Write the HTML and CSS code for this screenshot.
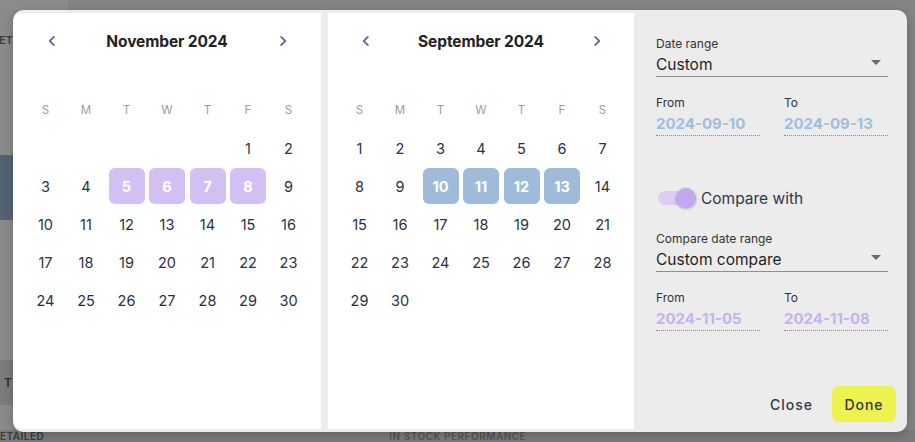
FILE: index.html
```html
<!DOCTYPE html>
<html lang="en">
<head>
<meta charset="utf-8">
<title>Date range picker</title>
<link rel="stylesheet" href="styles.css">
</head>
<body>
<div class="page">
  <div class="topbar"><div class="topbar-left"></div></div>
  <div class="side">
    <div class="side-text"><span>ET</span></div>
    <div class="side-block"></div>
    <div class="side-band"><span>T</span></div>
  </div>
  <div class="main-bg"></div>
  <div class="bottombar">
    <span class="bt1">ETAILED</span>
    <span class="bt2">IN STOCK PERFORMANCE</span>
  </div>
</div>

<div class="dialog">
  <section class="cal cal-1">
    <div class="cal-head">
      <button class="nav"><svg width="18" height="18" viewBox="0 0 24 24"><path d="M14.5 6.5 9 12l5.5 5.5" fill="none" stroke="#5b6f8c" stroke-width="2.4" stroke-linecap="round" stroke-linejoin="round"/></svg></button>
      <div class="cal-title">November 2024</div>
      <button class="nav"><svg width="18" height="18" viewBox="0 0 24 24"><path d="M9.5 6.5 15 12l-5.5 5.5" fill="none" stroke="#5b6f8c" stroke-width="2.4" stroke-linecap="round" stroke-linejoin="round"/></svg></button>
    </div>
    <div class="grid">
      <div class="wd">S</div><div class="wd">M</div><div class="wd">T</div><div class="wd">W</div><div class="wd">T</div><div class="wd">F</div><div class="wd">S</div>
      <div></div><div></div><div></div><div></div><div></div><div class="d">1</div><div class="d">2</div>
      <div class="d">3</div><div class="d">4</div><div class="d sel-p">5</div><div class="d sel-p">6</div><div class="d sel-p">7</div><div class="d sel-p">8</div><div class="d">9</div>
      <div class="d">10</div><div class="d">11</div><div class="d">12</div><div class="d">13</div><div class="d">14</div><div class="d">15</div><div class="d">16</div>
      <div class="d">17</div><div class="d">18</div><div class="d">19</div><div class="d">20</div><div class="d">21</div><div class="d">22</div><div class="d">23</div>
      <div class="d">24</div><div class="d">25</div><div class="d">26</div><div class="d">27</div><div class="d">28</div><div class="d">29</div><div class="d">30</div>
    </div>
  </section>

  <section class="cal cal-2">
    <div class="cal-head">
      <button class="nav"><svg width="18" height="18" viewBox="0 0 24 24"><path d="M14.5 6.5 9 12l5.5 5.5" fill="none" stroke="#5b6f8c" stroke-width="2.4" stroke-linecap="round" stroke-linejoin="round"/></svg></button>
      <div class="cal-title">September 2024</div>
      <button class="nav"><svg width="18" height="18" viewBox="0 0 24 24"><path d="M9.5 6.5 15 12l-5.5 5.5" fill="none" stroke="#5b6f8c" stroke-width="2.4" stroke-linecap="round" stroke-linejoin="round"/></svg></button>
    </div>
    <div class="grid">
      <div class="wd">S</div><div class="wd">M</div><div class="wd">T</div><div class="wd">W</div><div class="wd">T</div><div class="wd">F</div><div class="wd">S</div>
      <div class="d">1</div><div class="d">2</div><div class="d">3</div><div class="d">4</div><div class="d">5</div><div class="d">6</div><div class="d">7</div>
      <div class="d">8</div><div class="d">9</div><div class="d sel-b">10</div><div class="d sel-b">11</div><div class="d sel-b">12</div><div class="d sel-b">13</div><div class="d">14</div>
      <div class="d">15</div><div class="d">16</div><div class="d">17</div><div class="d">18</div><div class="d">19</div><div class="d">20</div><div class="d">21</div>
      <div class="d">22</div><div class="d">23</div><div class="d">24</div><div class="d">25</div><div class="d">26</div><div class="d">27</div><div class="d">28</div>
      <div class="d">29</div><div class="d">30</div>
    </div>
  </section>

  <aside class="settings">
    <div class="field">
      <div class="label">Date range</div>
      <div class="select"><span>Custom</span><span class="caret"></span></div>
    </div>
    <div class="range">
      <div>
        <div class="label">From</div>
        <div class="value blue">2024-09-10</div>
      </div>
      <div>
        <div class="label">To</div>
        <div class="value blue">2024-09-13</div>
      </div>
    </div>

    <div class="toggle-row">
      <div class="switch"><span class="thumb"></span></div>
      <span class="toggle-label">Compare with</span>
    </div>

    <div class="field field-compare">
      <div class="label">Compare date range</div>
      <div class="select"><span>Custom compare</span><span class="caret"></span></div>
    </div>
    <div class="range">
      <div>
        <div class="label">From</div>
        <div class="value purple">2024-11-05</div>
      </div>
      <div>
        <div class="label">To</div>
        <div class="value purple">2024-11-08</div>
      </div>
    </div>

    <div class="actions">
      <button class="btn btn-close">Close</button>
      <button class="btn btn-done">Done</button>
    </div>
  </aside>
</div>
</body>
</html>
```

FILE: styles.css
```css
* { box-sizing: border-box; }

html, body {
  margin: 0;
  padding: 0;
}

body {
  width: 915px;
  height: 442px;
  overflow: hidden;
  background: #808081;
  font-family: Inter, "Noto Sans", sans-serif;
  position: relative;
}

/* ---- dimmed page behind the dialog ---- */
.page {
  display: grid;
  grid-template-columns: 13px 1fr;
  grid-template-rows: 10px 420px 12px;
  width: 915px;
  height: 442px;
}

.topbar {
  grid-column: 1 / 3;
  background: #848485;
  display: flex;
}
.topbar-left {
  width: 68px;
  background: #8b8b8b;
}

.side {
  background: #8a8a8a;
  overflow: hidden;
  display: flex;
  flex-direction: column;
}
.side-text {
  margin-top: 23px;
  height: 14px;
  display: flex;
  justify-content: flex-end;
  font-size: 11px;
  font-weight: 600;
  line-height: 14px;
  color: #3a3a3a;
  white-space: nowrap;
}
.side-block {
  margin-top: 108px;
  height: 65px;
  background: #546374;
}
.side-band {
  margin-top: 140px;
  height: 45px;
  background: #7b7b7b;
  display: flex;
  justify-content: flex-end;
  align-items: center;
  padding-right: 1px;
  font-size: 12px;
  font-weight: 600;
  color: #2e2e2e;
  white-space: nowrap;
}

.main-bg {
  background: #838384;
}

.bottombar {
  grid-column: 1 / 3;
  background: #7b7b7b;
  display: flex;
  align-items: flex-start;
  overflow: hidden;
  font-size: 10px;
  font-weight: 600;
  color: #3a3a3a;
  letter-spacing: 0.5px;
  white-space: nowrap;
}
.bt1 {
  line-height: 12px;
}
.bt2 {
  margin-left: 345px;
  line-height: 12px;
  color: #555;
}

/* ---- dialog ---- */
.dialog {
  position: absolute;
  left: 13px;
  top: 10px;
  width: 894px;
  height: 422px;
  display: flex;
  background: #ececec;
  border-radius: 10px;
  overflow: hidden;
  box-shadow: 0 3px 10px rgba(0, 0, 0, 0.22);
}

.cal {
  background: #ffffff;
  margin: 3px 0;
  padding-top: 16px;
  display: flex;
  flex-direction: column;
  align-items: center;
}
.cal-1 {
  width: 308px;
  border-radius: 9px 0 0 9px;
}
.cal-2 {
  width: 306px;
  margin-left: 7px;
}

.cal-head {
  width: 279px;
  height: 24px;
  padding: 0 12px;
  display: flex;
  align-items: center;
  justify-content: space-between;
}
.nav {
  width: 24px;
  height: 24px;
  padding: 0;
  border: 0;
  background: none;
  display: flex;
  align-items: center;
  justify-content: center;
}
.cal-title {
  font-size: 15.5px;
  font-weight: 700;
  color: #222222;
  letter-spacing: -0.1px;
}

.grid {
  margin-top: 39px;
  display: grid;
  grid-template-columns: repeat(7, 36px);
  grid-auto-rows: 36px;
  column-gap: 4.5px;
  row-gap: 2px;
}
.grid > div {
  display: flex;
  align-items: center;
  justify-content: center;
}
.wd {
  font-size: 11.5px;
  color: #9c9c9c;
}
.d {
  font-size: 14.5px;
  color: #283245;
}
.sel-p,
.sel-b {
  color: #ffffff;
  font-weight: 700;
  border-radius: 6px;
}
.sel-p { background: #d2c0f3; }
.sel-b { background: #9ebcda; }

/* ---- settings panel ---- */
.settings {
  flex: 1;
  padding: 26px 19px 10px 22px;
  display: flex;
  flex-direction: column;
}

.label {
  font-size: 12px;
  line-height: 16px;
  color: #333333;
}
.select {
  height: 25px;
  display: flex;
  align-items: center;
  justify-content: space-between;
  border-bottom: 1px solid #8e8e8e;
  font-size: 15.5px;
  color: #1f1f1f;
}
.caret {
  width: 0;
  height: 0;
  margin-right: 7px;
  margin-top: -3px;
  border-left: 5px solid transparent;
  border-right: 5px solid transparent;
  border-top: 5px solid #6a6a6a;
}

.range {
  display: grid;
  grid-template-columns: 104px 104px;
  column-gap: 24px;
  margin-top: 18px;
}
.value {
  margin-top: 2px;
  font-size: 15px;
  font-weight: 700;
  line-height: 22px;
  border-bottom: 1px dotted #8a8a8a;
}
.blue { color: #9fbfe0; }
.purple { color: #c8b1f0; }

.toggle-row {
  margin-top: 50px;
  height: 24px;
  display: flex;
  align-items: center;
}
.switch {
  position: relative;
  width: 34px;
  height: 14px;
  margin-left: 2px;
  border-radius: 7px;
  background: #ddcdf6;
}
.thumb {
  position: absolute;
  left: 18px;
  top: -3px;
  width: 20px;
  height: 20px;
  border-radius: 50%;
  background: #c3a7f0;
  box-shadow: 0 1px 3px rgba(0, 0, 0, 0.3);
}
.toggle-label {
  margin-left: 9px;
  font-size: 15.5px;
  color: #2d3849;
}

.field-compare {
  margin-top: 21px;
}

.actions {
  margin-top: auto;
  margin-right: -8px;
  display: flex;
  justify-content: flex-end;
  align-items: center;
  gap: 7px;
}
.btn {
  height: 36px;
  padding: 0 12px;
  border: 0;
  border-radius: 7px;
  background: none;
  font-family: Inter, "Noto Sans", sans-serif;
  font-size: 14px;
  font-weight: 500;
  letter-spacing: 1px;
  color: #2d3a4b;
}
.btn-done {
  width: 64px;
  padding: 0;
  background: #eef24f;
}
```
